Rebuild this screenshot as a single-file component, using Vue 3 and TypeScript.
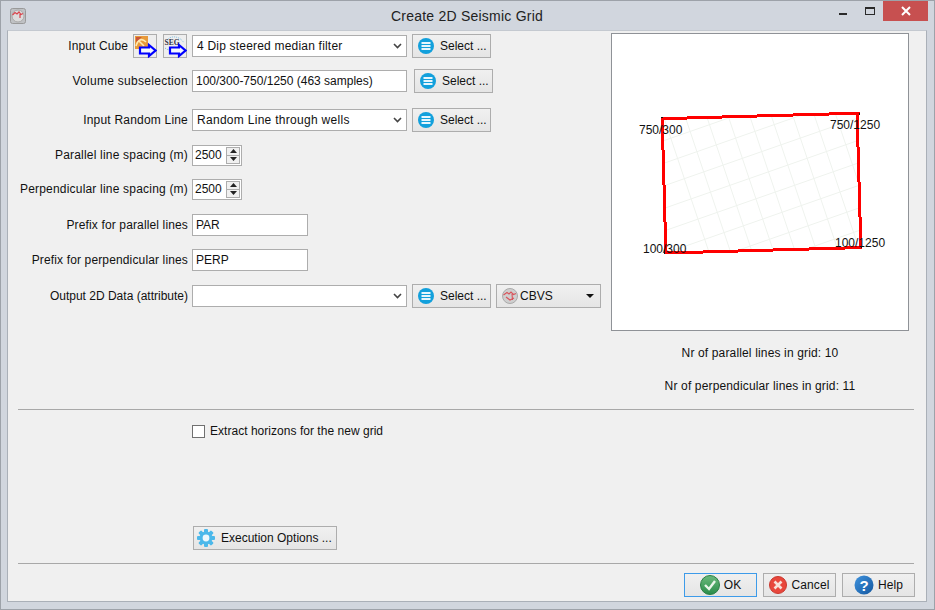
<script setup lang="ts">
interface Seg { x1: number; y1: number; x2: number; y2: number }

const across: Seg[] = Array.from({ length: 10 }, (_, i) => {
  const y = 118 + i * 22.6;
  return { x1: 640, y1: y + 8.4, x2: 880, y2: y - 75.6 };
});
const along: Seg[] = Array.from({ length: 11 }, (_, i) => {
  const x = 658 + i * 21.6;
  return { x1: x, y1: 100, x2: x + 57, y2: 270 };
});
const gridLines: Seg[] = [...across, ...along];
const clipPath = "M662.5 119 L858 114 L860 247.5 L665 253 Z";
const redPath = [
  "M661 118.5H687M687 117.5H722M722 116.5H757M757 115.5H793M793 114.5H829M829 113.5H859.5",
  "M857.5 112V147M858.5 147V182M859.5 182V217M860.5 217V249",
  "M662.5 117V150M663.5 150V185M664.5 185V222M665.5 222V254",
  "M664 252.5H703M703 251.5H738M738 250.5H773M773 249.5H809M809 248.5H845M845 247.5H862"
].join("");
</script>

<template>
  <div class="window">
    <header class="titlebar">
      <span class="app-icon">
        <svg width="16" height="16" viewBox="0 0 16 16"><rect x=".5" y=".5" width="15" height="15" rx="2" fill="#bfc1c4" stroke="#999"/><circle cx="8" cy="8" r="6" fill="#dcdcdc" stroke="#aaa"/><path d="M2.5 7 L5 4.5 L7 6 L9 4 L11 6.5 L13 5.5 M10 6 V10" fill="none" stroke="#d9434b" stroke-width="1.2"/></svg>
      </span>
      <span class="title">Create 2D Seismic Grid</span>
      <span class="ctrl min"><i></i></span>
      <span class="ctrl max"><i></i></span>
      <span class="close">
        <svg width="12" height="10" viewBox="0 0 12 10"><path d="M2 1 L10 9 M10 1 L2 9" stroke="#fff" stroke-width="2"/></svg>
      </span>
    </header>

    <main class="client">
      <section class="top">
        <div class="form">
          <div class="row r1">
            <label class="ls1">Input Cube</label>
            <span class="pick">
              <svg width="24" height="24" viewBox="0 0 24 24"><rect x=".5" y=".5" width="23" height="23" fill="#eee" stroke="#adadad"/><rect x="2" y="2" width="13" height="13" fill="#e89a3a"/><path d="M3 12 C5 5 9 4 13 8 M5 6 L11 12" stroke="#ffe9b0" stroke-width="1.6" fill="none"/><path d="M3 3 H9 L3 8 Z" fill="#c9553a"/><path d="M7 14.5 H16 V12 L22.5 17.5 L16 23 V20.5 H7 Z" fill="#f4f8ff" stroke="#0000ff" stroke-width="2.2" transform="translate(0 -1)"/></svg>
            </span>
            <span class="pick second">
              <svg width="24" height="24" viewBox="0 0 24 24"><rect x=".5" y=".5" width="23" height="23" fill="#eee" stroke="#adadad"/><path d="M4 6 C8 1 17 2 21 9 M2 14 C5 16 6 16 8 16" stroke="#7fbfe0" stroke-dasharray="1 1" fill="none"/><text x="1.5" y="11" class="seg">SEG</text><path d="M7 14.5 H16 V12 L22.5 17.5 L16 23 V20.5 H7 Z" fill="#f4f8ff" stroke="#0000ff" stroke-width="2.2" transform="translate(0 -1)"/></svg>
            </span>
            <div class="combo c215"><span class="ls3">4 Dip steered median filter</span><svg class="chev" width="9" height="6" viewBox="0 0 9 6"><path d="M1 1 L4.5 4.5 L8 1" fill="none" stroke="#444" stroke-width="1.6"/></svg></div>
            <button class="btn sel"><svg class="list" width="16" height="16" viewBox="0 0 16 16"><circle cx="8" cy="8" r="8" fill="#12a0dc"/><rect x="3.5" y="4" width="9" height="2" fill="#e6f6fd"/><rect x="3.5" y="7" width="9" height="2" fill="#e6f6fd"/><rect x="3.5" y="10" width="9" height="2" fill="#e6f6fd"/></svg>Select ...</button>
          </div>
          <div class="row r2">
            <label class="ls4">Volume subselection</label>
            <div class="input c215 ro">100/300-750/1250 (463 samples)</div>
            <button class="btn sel shift"><svg class="list" width="16" height="16" viewBox="0 0 16 16"><circle cx="8" cy="8" r="8" fill="#12a0dc"/><rect x="3.5" y="4" width="9" height="2" fill="#e6f6fd"/><rect x="3.5" y="7" width="9" height="2" fill="#e6f6fd"/><rect x="3.5" y="10" width="9" height="2" fill="#e6f6fd"/></svg>Select ...</button>
          </div>
          <div class="row r3">
            <label class="ls3">Input Random Line</label>
            <div class="combo c215"><span class="ls4">Random Line through wells</span><svg class="chev" width="9" height="6" viewBox="0 0 9 6"><path d="M1 1 L4.5 4.5 L8 1" fill="none" stroke="#444" stroke-width="1.6"/></svg></div>
            <button class="btn sel"><svg class="list" width="16" height="16" viewBox="0 0 16 16"><circle cx="8" cy="8" r="8" fill="#12a0dc"/><rect x="3.5" y="4" width="9" height="2" fill="#e6f6fd"/><rect x="3.5" y="7" width="9" height="2" fill="#e6f6fd"/><rect x="3.5" y="10" width="9" height="2" fill="#e6f6fd"/></svg>Select ...</button>
          </div>
          <div class="row r4">
            <label class="ls3">Parallel line spacing (m)</label>
            <div class="spin"><span>2500</span><span class="arrows"><b><svg width="7" height="4" viewBox="0 0 7 4"><path d="M3.5 0 L7 4 H0 Z" fill="#222"/></svg></b><b><svg width="7" height="4" viewBox="0 0 7 4"><path d="M0 0 H7 L3.5 4 Z" fill="#222"/></svg></b></span></div>
          </div>
          <div class="row r5">
            <label class="ls3">Perpendicular line spacing (m)</label>
            <div class="spin"><span>2500</span><span class="arrows"><b><svg width="7" height="4" viewBox="0 0 7 4"><path d="M3.5 0 L7 4 H0 Z" fill="#222"/></svg></b><b><svg width="7" height="4" viewBox="0 0 7 4"><path d="M0 0 H7 L3.5 4 Z" fill="#222"/></svg></b></span></div>
          </div>
          <div class="row r6">
            <label class="ls2">Prefix for parallel lines</label>
            <div class="input c116">PAR</div>
          </div>
          <div class="row r7">
            <label class="ls2">Prefix for perpendicular lines</label>
            <div class="input c116">PERP</div>
          </div>
          <div class="row r8">
            <label>Output 2D Data (attribute)</label>
            <div class="combo c215"><span></span><svg class="chev" width="9" height="6" viewBox="0 0 9 6"><path d="M1 1 L4.5 4.5 L8 1" fill="none" stroke="#444" stroke-width="1.6"/></svg></div>
            <button class="btn sel"><svg class="list" width="16" height="16" viewBox="0 0 16 16"><circle cx="8" cy="8" r="8" fill="#12a0dc"/><rect x="3.5" y="4" width="9" height="2" fill="#e6f6fd"/><rect x="3.5" y="7" width="9" height="2" fill="#e6f6fd"/><rect x="3.5" y="10" width="9" height="2" fill="#e6f6fd"/></svg>Select ...</button>
            <button class="btn fmt"><svg width="16" height="16" viewBox="0 0 16 16"><circle cx="8" cy="8" r="7.5" fill="#cfcfcf" stroke="#aaa"/><path d="M1.5 7 L5 4.5 L7 6 L9 4 L11.5 6.5 L14 5.5 M10 6 L10.5 12 M4 9 L8 12 L12 10" fill="none" stroke="#d9535b" stroke-width="1.1"/></svg><span>CBVS</span><svg class="tri" width="8" height="4" viewBox="0 0 8 4"><path d="M0 0 H8 L4 4 Z" fill="#111"/></svg></button>
          </div>
        </div>

        <aside class="side">
          <div class="canvas">
            <svg width="298" height="298" viewBox="611 33 298 298">
              <defs><clipPath id="gridClip"><path :d="clipPath"/></clipPath></defs>
              <g clip-path="url(#gridClip)">
                <line v-for="(l, i) in gridLines" :key="i" :x1="l.x1" :y1="l.y1" :x2="l.x2" :y2="l.y2" stroke="#eff3ee" stroke-width="1"/>
              </g>
              <path :d="redPath" fill="none" stroke="#ff0000" stroke-width="3" shape-rendering="crispEdges"/>
              <path d="M664 250V254M661 117H663M859 113V115M861 246V248" stroke="#111" stroke-width="1" shape-rendering="crispEdges"/>
              <text x="639" y="134" class="ann">750/300</text>
              <text x="830" y="129" class="ann">750/1250</text>
              <text x="643" y="253" class="ann">100/300</text>
              <text x="835" y="247" class="ann">100/1250</text>
            </svg>
          </div>
          <p class="stat s1">Nr of parallel lines in grid: 10</p>
          <p class="stat s2">Nr of perpendicular lines in grid: 11</p>
        </aside>
      </section>

      <hr class="sep first" />

      <div class="check-row">
        <span class="box"></span><span class="tiny">Extract horizons for the new grid</span>
      </div>

      <div class="exec-row">
        <button class="btn exec">
          <svg width="20" height="20" viewBox="0 0 20 20"><g fill="#4cb8ea"><circle cx="10" cy="10" r="6.5"/><rect x="8" y="1" width="4" height="18" rx="1"/><rect x="8" y="1" width="4" height="18" rx="1" transform="rotate(45 10 10)"/><rect x="8" y="1" width="4" height="18" rx="1" transform="rotate(90 10 10)"/><rect x="8" y="1" width="4" height="18" rx="1" transform="rotate(135 10 10)"/></g><circle cx="10" cy="10" r="3.4" fill="#eef8fd"/></svg>
          Execution Options ...
        </button>
      </div>

      <hr class="sep last" />

      <footer class="actions">
        <button class="btn act ok"><svg width="20" height="20" viewBox="0 0 20 20"><defs><linearGradient id="okG" x1="0" y1="0" x2="0" y2="1"><stop offset="0" stop-color="#6cbb7c"/><stop offset="1" stop-color="#2a8c4a"/></linearGradient></defs><circle cx="10" cy="10" r="9.5" fill="url(#okG)" stroke="#2b7f45"/><path d="M5 10 L9 14 L15 6" fill="none" stroke="#eaf6ea" stroke-width="2.4"/></svg>OK</button>
        <button class="btn act cancel"><svg width="18" height="18" viewBox="0 0 18 18"><circle cx="9" cy="9" r="8.5" fill="#e8473c" stroke="#c9382e"/><path d="M5.5 5.5 L12.5 12.5 M12.5 5.5 L5.5 12.5" stroke="#f8e0d8" stroke-width="2.6"/></svg><span class="ls2">Cancel</span></button>
        <button class="btn act"><svg width="20" height="20" viewBox="0 0 20 20"><defs><linearGradient id="hpG" x1="0" y1="0" x2="1" y2="1"><stop offset="0" stop-color="#3f93de"/><stop offset="1" stop-color="#14579f"/></linearGradient></defs><circle cx="10" cy="10" r="9.5" fill="url(#hpG)"/><text x="10" y="16" class="q">?</text></svg><span class="ls1">Help</span></button>
      </footer>
    </main>
  </div>
</template>

<style>
html, body { margin: 0; padding: 0; overflow: hidden; }
</style>

<style scoped>
* { box-sizing: border-box; }
.window {
  width: 935px; height: 610px; background: #d1d6de; border: 1px solid #9da2a9;
  display: flex; flex-direction: column;
  font-family: "Liberation Sans", Arial, sans-serif; font-size: 12px; color: #111;
}
.titlebar { height: 29px; display: flex; align-items: flex-start; position: relative; flex: none; }
.app-icon { margin: 7px 0 0 9px; height: 16px; display: block; }
.title { position: absolute; left: 0; right: 0; top: 7px; text-align: center; font-size: 14px; letter-spacing: .23px; color: #222; padding-right: 1px; }
.ctrl { position: absolute; top: 0; height: 20px; }
.min { left: 837px; width: 9px; }
.min i { position: absolute; left: 1px; top: 12px; width: 8px; height: 2px; background: #2a2a2a; }
.max { left: 864px; width: 12px; }
.max i { position: absolute; left: 0; top: 6px; width: 10px; height: 8px; border: 1px solid #2a2a2a; border-top-width: 2px; }
.close { position: absolute; left: 882px; top: 0; width: 45px; height: 20px; background: #c75050; display: flex; align-items: center; justify-content: center; }

.client {
  flex: 1; margin: 0 7px 7px 6px; background: #f0f0f0; border: 1px solid #aab0b8; border-top-color: #c4c9d0;
  display: flex; flex-direction: column; padding: 0 12px 0 0;
}
.top { display: flex; height: 349px; flex: none; }
.form { width: 602px; flex: none; }
.row { display: flex; align-items: center; height: 24px; position: relative; }
.row label { width: 180px; text-align: right; flex: none; margin-right: 4px; white-space: nowrap; }
.tiny { letter-spacing: .03px; }
.ls1 { letter-spacing: .1px; }
.ls2 { letter-spacing: .14px; }
.ls3 { letter-spacing: .2px; }
.ls4 { letter-spacing: .29px; }
.r1 { margin-top: 3px; }
.r1 label { width: 120px; margin-right: 5px; }
.r2 { margin-top: 11px; }
.r3 { margin-top: 15px; }
.r4 { margin-top: 11px; }
.r5 { margin-top: 10px; }
.r6 { margin-top: 12px; }
.r7 { margin-top: 11px; }
.r8 { margin-top: 12px; }
.pick { width: 24px; height: 24px; flex: none; }
.second { margin-left: 6px; margin-right: 5px; }
.combo, .input {
  height: 22px; background: #fff; border: 1px solid #adadad; display: flex; align-items: center;
  padding: 0 4px; white-space: nowrap;
}
.input { padding: 0 3px; }
.combo span { flex: 1; }
.c215 { width: 215px; }
.c116 { width: 116px; }
.btn {
  font: inherit; color: #111; height: 24px; border: 1px solid #adadad;
  background: linear-gradient(#f0f0f0, #e5e5e5); display: inline-flex; align-items: center; padding: 0; margin: 0;
}
.sel { width: 79px; margin-left: 5px; padding-left: 5px; gap: 6px; }
.shift { margin-left: 7px; }
.list { flex: none; }
.fmt { width: 105px; margin-left: 5px; padding-left: 5px; gap: 2px; position: relative; }
.tri { position: absolute; right: 6px; top: 9px; }
.spin { width: 50px; height: 21px; background: #fff; border: 1px solid #adadad; display: flex; align-items: center; padding-left: 2px; }
.spin > span:first-child { flex: 1; }
.arrows { width: 14px; height: 17px; margin-right: 1px; display: flex; flex-direction: column; border: 1px solid #adadad; background: #f0f0f0; }
.arrows b { flex: 1; display: flex; align-items: center; justify-content: center; }
.arrows b + b { border-top: 1px solid #adadad; }

.side { width: 298px; margin-left: 1px; flex: none; }
.canvas { margin-top: 2px; width: 298px; height: 298px; background: #fff; box-shadow: inset 0 0 0 1px #8f9297; }
.canvas svg { display: block; }
.ann { font: 12px "Liberation Sans", Arial, sans-serif; fill: #111; }
.stat { margin: 0; text-align: center; line-height: 14px; font-size: 12px; letter-spacing: .15px; }
.s1 { margin-top: 15px; }
.s2 { margin-top: 19px; }

.sep { border: none; height: 1px; background: #a8a8a8; margin: 0; margin-left: 10px; width: 896px; flex: none; }
.first { margin-top: 29px; }
.check-row { display: flex; align-items: center; gap: 5px; margin: 14px 0 0 184px; height: 14px; }
.box { width: 13px; height: 13px; background: #fff; border: 1px solid #707070; }
.exec-row { margin: 88px 0 0 185px; }
.exec { width: 144px; height: 24px; padding-left: 2px; gap: 5px; }
.last { margin-top: 12px; }
.actions { display: flex; justify-content: flex-end; margin-top: 9px; margin-right: -1px; gap: 6px; }
.act { width: 73px; height: 24px; justify-content: center; gap: 4px; }
.ok { border-color: #3d9be9; }
.seg { font: bold 7.5px "Liberation Serif", serif; fill: #334; }
.q { font: bold 15px "Liberation Sans", sans-serif; fill: #fff; text-anchor: middle; }
</style>
